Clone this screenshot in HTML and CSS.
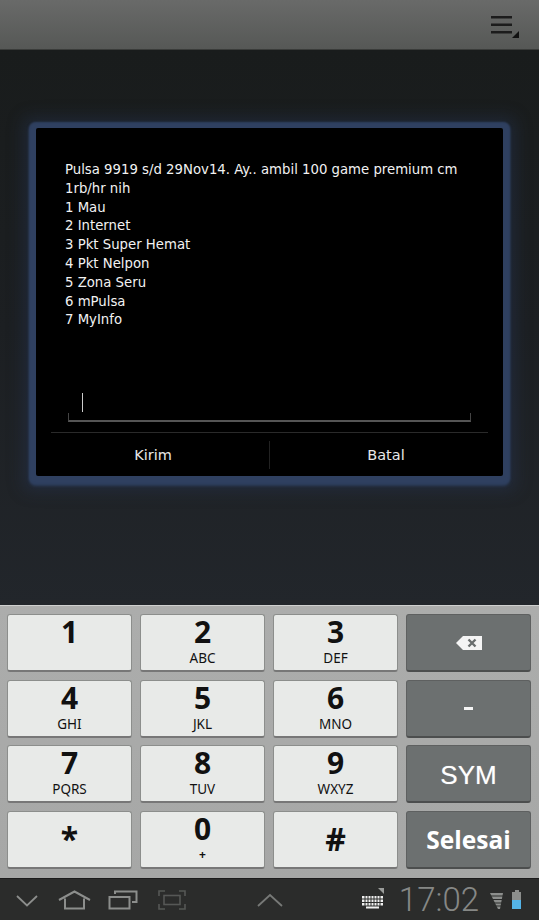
FILE: index.html
```html
<!DOCTYPE html>
<html lang="id">
<head>
<meta charset="utf-8">
<title>USSD</title>
<link rel="stylesheet" href="styles.css">
</head>
<body>
<div class="screen">
  <header class="appbar">
    <svg class="menu-icon" width="28" height="28" viewBox="0 0 28 28">
      <path d="M1 5h21v2.400H1zM1 12.500h21v2.400H1zM1 20h21v2.400H1z" fill="#1c1c1c"/>
      <path d="M29 20v7h-7z" fill="#111"/>
    </svg>
  </header>
  <main class="stage">
    <section class="dialog">
      <div class="message">
        <p>Pulsa 9919 s/d 29Nov14. Ay.. ambil 100 game premium cm</p>
        <p>1rb/hr nih</p>
        <p>1 Mau</p>
        <p>2 Internet</p>
        <p>3 Pkt Super Hemat</p>
        <p>4 Pkt Nelpon</p>
        <p>5 Zona Seru</p>
        <p>6 mPulsa</p>
        <p>7 MyInfo</p>
      </div>
      <div class="input"><span class="caret"></span><span class="underline"></span></div>
      <div class="actions">
        <button class="action action-left">Kirim</button>
        <span class="action-sep"></span>
        <button class="action action-right">Batal</button>
      </div>
    </section>
  </main>
  <section class="keyboard">
    <div class="key"><b>1</b></div>
    <div class="key"><b>2</b><small>ABC</small></div>
    <div class="key"><b>3</b><small>DEF</small></div>
    <div class="key dark">
      <svg width="26" height="14" viewBox="0 0 26 14"><path d="M7 0h19v14H7L0 7z" fill="#f4f4f4"/><path d="M12.500 3.500l7 7m0-7l-7 7" stroke="#6a6e6e" stroke-width="2.400"/></svg>
    </div>
    <div class="key"><b>4</b><small>GHI</small></div>
    <div class="key"><b>5</b><small>JKL</small></div>
    <div class="key"><b>6</b><small>MNO</small></div>
    <div class="key dark"><span class="dash"></span></div>
    <div class="key"><b>7</b><small>PQRS</small></div>
    <div class="key"><b>8</b><small>TUV</small></div>
    <div class="key"><b>9</b><small>WXYZ</small></div>
    <div class="key dark sym">SYM</div>
    <div class="key sign">*</div>
    <div class="key"><b>0</b><small class="plus">+</small></div>
    <div class="key sign hash">#</div>
    <div class="key dark done">Selesai</div>
  </section>
  <footer class="navbar">
    <svg class="nav-back" width="24" height="14" viewBox="0 0 24 14"><path d="M2 2l10 9.500L22 2" fill="none" stroke="#8c8e8c" stroke-width="1.800"/></svg>
    <svg class="nav-home" width="33" height="20" viewBox="0 0 33 20"><path d="M1 10L16.500 1.500 32 10M7 8.500V18.500H26V8.500" fill="none" stroke="#8c8e8c" stroke-width="2"/></svg>
    <svg class="nav-recent" width="30" height="20" viewBox="0 0 30 20"><rect x="1.500" y="7" width="20" height="11.500" fill="none" stroke="#8c8e8c" stroke-width="2"/><path d="M7 4V1.500H28.500V12H24" fill="none" stroke="#8c8e8c" stroke-width="2"/></svg>
    <svg class="nav-shot" width="28" height="20" viewBox="0 0 28 20"><path d="M1 6V1h6M21 1h6v5M1 14v5h6M21 19h6v-5" fill="none" stroke="#565856" stroke-width="1.600"/><rect x="6" y="5.500" width="16" height="9" fill="none" stroke="#565856" stroke-width="1.600"/></svg>
    <svg class="nav-up" width="26" height="14" viewBox="0 0 26 14"><path d="M1 13L13 2l12 11" fill="none" stroke="#777977" stroke-width="1.800"/></svg>
    <div class="status">
      <svg class="kbd-icon" width="24" height="21" viewBox="0 0 24 21"><path d="M17 0h6v6z" fill="#9a9c9a"/><path d="M1 8h21v2.500H1zM1 11.500h21v2.500H1zM1 15h21v2.500H1z" fill="#f0f0f0"/><path d="M5 18.500h13v2H5z" fill="#f0f0f0"/><path d="M4 8v10M7 8v10M10 8v10M13 8v10M16 8v10M19 8v10" stroke="#2b2c2b" stroke-width="1"/></svg>
      <span class="clock">17:02</span>
      <svg class="signal" width="13" height="17" viewBox="0 0 13 17"><path d="M0 0h13l-3 16H8z" fill="#8c8e8c"/><path d="M0 3h13M1 6.500h12M2 10h10M4 13h7" stroke="#2b2c2b" stroke-width="1.200"/></svg>
      <div class="battery"><span class="battery-cap"></span><span class="battery-empty"></span><span class="battery-fill"></span></div>
    </div>
  </footer>
</div>
</body>
</html>
```
FILE: styles.css
```css
* { box-sizing: border-box; }
html, body { margin: 0; padding: 0; background: #1e2124; }
.screen {
  width: 539px;
  height: 920px;
  display: flex;
  flex-direction: column;
  overflow: hidden;
  font-family: "Noto Sans", sans-serif;
}
.appbar {
  height: 50px;
  flex: none;
  background: linear-gradient(#696a69, #565856);
  border-bottom: 1px solid #3a3c3a;
  display: flex;
  justify-content: flex-end;
  align-items: flex-start;
  padding: 11px 21px 0 0;
}
.menu-icon { display: block; overflow: visible; }
.stage {
  flex: 1;
  background: linear-gradient(#191c1c, #1c1f22 50%, #22262b);
  padding: 78px 36px 0;
}
.dialog {
  height: 348px;
  background: #000;
  border-radius: 2px;
  box-shadow: 0 1px 2px 7px #2f4060, 0 3px 3px 7px #2d3d5a, 0 2px 16px 13px rgba(40, 60, 96, 0.34);
  display: flex;
  flex-direction: column;
  padding: 0 15px;
}
.message {
  flex: 1;
  padding: 33px 14px 0;
  color: #f2f2f2;
  font-family: "DejaVu Sans", sans-serif;
  font-size: 13.270px;
  line-height: 18.800px;
}
.message p { margin: 0; white-space: nowrap; }
.input {
  height: 29px;
  margin: 0 17px 10px;
  display: flex;
  flex-direction: column;
  padding: 0;
}
.caret {
  display: block;
  flex: none;
  width: 1px;
  height: 19px;
  margin-left: 14px;
  background: #ccc;
}
.underline {
  display: block;
  flex: none;
  height: 9px;
  margin-top: 1px;
  border-bottom: 2px solid #555;
  border-left: 1px solid #444;
  border-right: 1px solid #444;
}
.actions {
  height: 44px;
  border-top: 1px solid #2a2a2a;
  display: flex;
  align-items: center;
}
.action {
  flex: 1;
  height: 100%;
  background: none;
  border: 0;
  padding: 0;
  color: #e8e8e8;
  font-family: "DejaVu Sans", sans-serif;
  font-size: 14.500px;
}
.action-left { padding-right: 14px; }
.action-right { padding-left: 14px; }
.action-sep { width: 1px; height: 28px; background: #222; }
.keyboard {
  height: 273px;
  flex: none;
  background: linear-gradient(#acadac, #a6a7a6);
  border-top: 1px solid #cfd0cf;
  display: grid;
  grid-template-columns: repeat(4, 125px);
  grid-auto-rows: 58px;
  column-gap: 8px;
  row-gap: 7.670px;
  padding: 8px 7px 0;
}
.key {
  background: #e8eae8;
  border-radius: 3px;
  border: 1px solid #8c8e8c;
  border-bottom: 2px solid #777;
  display: flex;
  flex-direction: column;
  align-items: center;
  color: #111;
}
.key b {
  display: block;
  font-size: 30px;
  line-height: 36px;
  font-weight: 700;
  margin-top: -1px;
}
.key small {
  display: block;
  font-size: 13.500px;
  line-height: 16px;
  margin-top: 0;
}
.key small.plus { font-size: 12px; font-weight: 700; }
.key.dark {
  background: #6c7070;
  border-color: #5e6060;
  border-bottom-color: #4c4e4e;
  justify-content: center;
  color: #fff;
}
.dash { display: block; width: 9px; height: 3px; background: #f4f4f4; }
.sym {
  font-family: "Liberation Sans", sans-serif;
  font-size: 26px;
  padding-top: 3px;
  text-shadow: 0 0 1px rgba(255, 255, 255, 0.5);
}
.done { font-size: 24.500px; font-weight: 700; font-family: "Open Sans", sans-serif; }
.sign {
  justify-content: center;
  font-size: 32px;
  font-weight: 700;
  line-height: 1;
}
.navbar {
  height: 42px;
  flex: none;
  background: #2b2c2b;
  border-top: 1px solid #1c1c1c;
  display: flex;
  align-items: center;
  padding: 0 18px 0 15px;
}
.navbar svg { display: block; flex: none; }
.nav-back { margin-top: 2px; }
.nav-home { margin-left: 19px; }
.nav-recent { margin-left: 17px; }
.nav-shot { margin-left: 20px; }
.nav-up { margin-left: 71px; margin-top: 1px; }
.status { margin-left: auto; display: flex; align-items: center; }
.kbd-icon { margin-top: -2px; }
.clock {
  font-family: Roboto, sans-serif;
  font-weight: 300;
  font-size: 33px;
  line-height: 40px;
  color: #868886;
  margin-left: 14px;
}
.signal { margin-left: 11px; margin-top: 3px; }
.battery {
  width: 9px;
  height: 19px;
  margin-left: 9px;
  display: flex;
  flex-direction: column;
  align-items: center;
}
.battery-cap { width: 4px; height: 2px; background: #8c8e8c; }
.battery-empty { width: 9px; height: 8px; background: #8c8e8c; }
.battery-fill { width: 9px; height: 9px; background: #54b4e8; }
```
